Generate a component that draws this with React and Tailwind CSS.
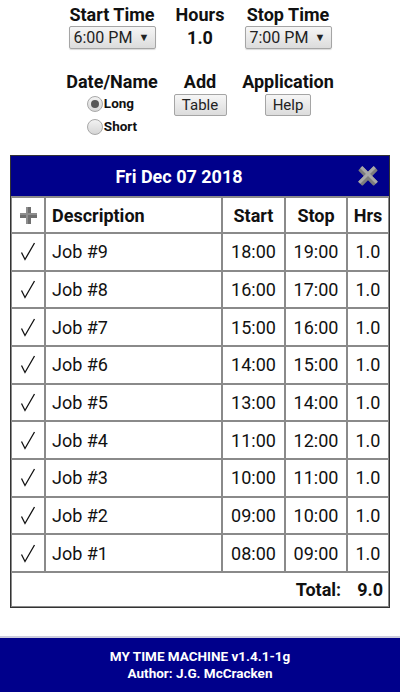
import React from 'react';

const jobs = [
    { n: 9, start: '18:00', stop: '19:00' },
    { n: 8, start: '16:00', stop: '17:00' },
    { n: 7, start: '15:00', stop: '16:00' },
    { n: 6, start: '14:00', stop: '15:00' },
    { n: 5, start: '13:00', stop: '14:00' },
    { n: 4, start: '11:00', stop: '12:00' },
    { n: 3, start: '10:00', stop: '11:00' },
    { n: 2, start: '09:00', stop: '10:00' },
    { n: 1, start: '08:00', stop: '09:00' },
];

const cols = 'grid grid-cols-[32px_175px_61px_60px_40px] gap-x-[2px]';

function FakeSelect({ value }) {
    return (
        <div className="w-[87px] h-[23px] flex items-center justify-between pl-[4px] pr-[5px] border border-[#a5a5a5] rounded-[2px] bg-gradient-to-b from-[#f6f6f6] to-[#dcdcdc] shadow-[0_1px_1px_rgba(0,0,0,0.15)]">
            <span className="text-[16px] leading-none text-[#222]">{value}</span>
            <span className="text-[11px] leading-none text-[#222]">▼</span>
        </div>
    );
}

function Btn({ children, width }) {
    return (
        <div className={`${width} h-[22px] flex items-center justify-center border border-[#a5a5a5] rounded-[2px] bg-gradient-to-b from-[#f6f6f6] to-[#dcdcdc] text-[15px] leading-none text-[#222]`}>
            {children}
        </div>
    );
}

function Radio({ checked, label }) {
    return (
        <div className="flex items-center h-[23px]">
            <span className="w-[16px] h-[16px] rounded-full border border-[#a8a8a8] bg-gradient-to-b from-[#f2f2f2] to-[#d6d6d6] flex items-center justify-center">
                {checked && <span className="w-[8px] h-[8px] rounded-full bg-[#555]" />}
            </span>
            <span className="ml-[1px] text-[13.5px] font-bold text-[#111]">{label}</span>
        </div>
    );
}

function CloseIcon() {
    return (
        <svg width="22" height="22" viewBox="0 0 22 22">
            <g transform="rotate(45 11 11)">
                <rect x="8" y="0" width="6" height="22" rx="1" fill="#7d7d7d" />
                <rect x="0" y="8" width="22" height="6" rx="1" fill="#7d7d7d" />
                <rect x="8" y="0" width="3" height="22" fill="#a8a8a8" />
                <rect x="0" y="8" width="22" height="3" fill="#a8a8a8" />
            </g>
        </svg>
    );
}

function PlusIcon() {
    return (
        <svg width="17" height="17" viewBox="0 0 17 17">
            <rect x="6" y="0" width="5" height="17" fill="#6f6f6f" />
            <rect x="0" y="6" width="17" height="5" fill="#6f6f6f" />
            <rect x="6" y="0" width="2" height="17" fill="#8e8e8e" />
            <rect x="0" y="6" width="17" height="2" fill="#8e8e8e" />
        </svg>
    );
}

function Check() {
    return (
        <svg width="16" height="19" viewBox="0 0 16 19">
            <polyline points="1.5,10.5 5,17.5 14.5,1" fill="none" stroke="#111" strokeWidth="1.3" />
        </svg>
    );
}

export default function App() {
    return (
        <div className="w-[400px] h-[692px] bg-white flex flex-col text-[#111] font-['Roboto','Liberation_Sans',sans-serif]">
            {/* controls */}
            <div className="flex justify-center gap-x-[12px] pt-[4px]">
                <div className="w-[92px] flex flex-col items-center">
                    <div className="text-[18px] font-bold leading-[22px]">Start Time</div>
                    <FakeSelect value="6:00 PM" />
                </div>
                <div className="w-[60px] flex flex-col items-center">
                    <div className="text-[18px] font-bold leading-[22px]">Hours</div>
                    <div className="text-[18px] font-bold leading-[23px]">1.0</div>
                </div>
                <div className="w-[92px] flex flex-col items-center">
                    <div className="text-[18px] font-bold leading-[22px]">Stop Time</div>
                    <FakeSelect value="7:00 PM" />
                </div>
            </div>

            <div className="flex justify-center gap-x-[12px] mt-[22px]">
                <div className="w-[92px] flex flex-col items-center">
                    <div className="text-[18px] font-bold leading-[21px]">Date/Name</div>
                    <div className="flex flex-col">
                        <Radio checked label="Long" />
                        <Radio label="Short" />
                    </div>
                </div>
                <div className="w-[60px] flex flex-col items-center">
                    <div className="text-[18px] font-bold leading-[21px] mb-[2px]">Add</div>
                    <Btn width="w-[53px]">Table</Btn>
                </div>
                <div className="w-[92px] flex flex-col items-center">
                    <div className="text-[18px] font-bold leading-[21px] mb-[2px]">Application</div>
                    <Btn width="w-[46px]">Help</Btn>
                </div>
            </div>

            {/* table */}
            <div className="mx-[10px] mt-[17px] border border-[#333] bg-[#8a8a8a] p-[1px] flex flex-col gap-y-[2px]">
                <div className="h-[40px] -mt-[1px] -mx-[1px] bg-[#00008b] flex items-center">
                    <div className="w-[336px] text-center text-white text-[18px] font-bold">Fri Dec 07 2018</div>
                    <div className="flex-1 flex justify-center pr-[1px]">
                        <CloseIcon />
                    </div>
                </div>
                <div className={`${cols} h-[34px] text-[18px] font-bold`}>
                    <div className="bg-white flex items-center justify-center"><PlusIcon /></div>
                    <div className="bg-white flex items-center pl-[6px]">Description</div>
                    <div className="bg-white flex items-center justify-center">Start</div>
                    <div className="bg-white flex items-center justify-center">Stop</div>
                    <div className="bg-white flex items-center justify-center">Hrs</div>
                </div>
                {jobs.map((j) => (
                    <div key={j.n} className={`${cols} h-[35.67px] text-[18px]`}>
                        <div className="bg-white flex items-center justify-center"><Check /></div>
                        <div className="bg-white flex items-center pl-[6px]">Job #{j.n}</div>
                        <div className="bg-white flex items-center justify-center">{j.start}</div>
                        <div className="bg-white flex items-center justify-center">{j.stop}</div>
                        <div className="bg-white flex items-center justify-center">1.0</div>
                    </div>
                ))}
                <div className="h-[33px] bg-white flex items-center justify-end pr-[5px] text-[18px] font-bold">
                    <span>Total:</span>
                    <span className="ml-[16px]">9.0</span>
                </div>
            </div>

            {/* footer */}
            <div className="mt-auto h-[56px] border-t-2 border-[#ccccdd] bg-[#00008b] flex flex-col items-center justify-center text-white text-[13.5px] font-bold leading-[17px]">
                <div>MY TIME MACHINE v1.4.1-1g</div>
                <div>Author: J.G. McCracken</div>
            </div>
        </div>
    );
}
